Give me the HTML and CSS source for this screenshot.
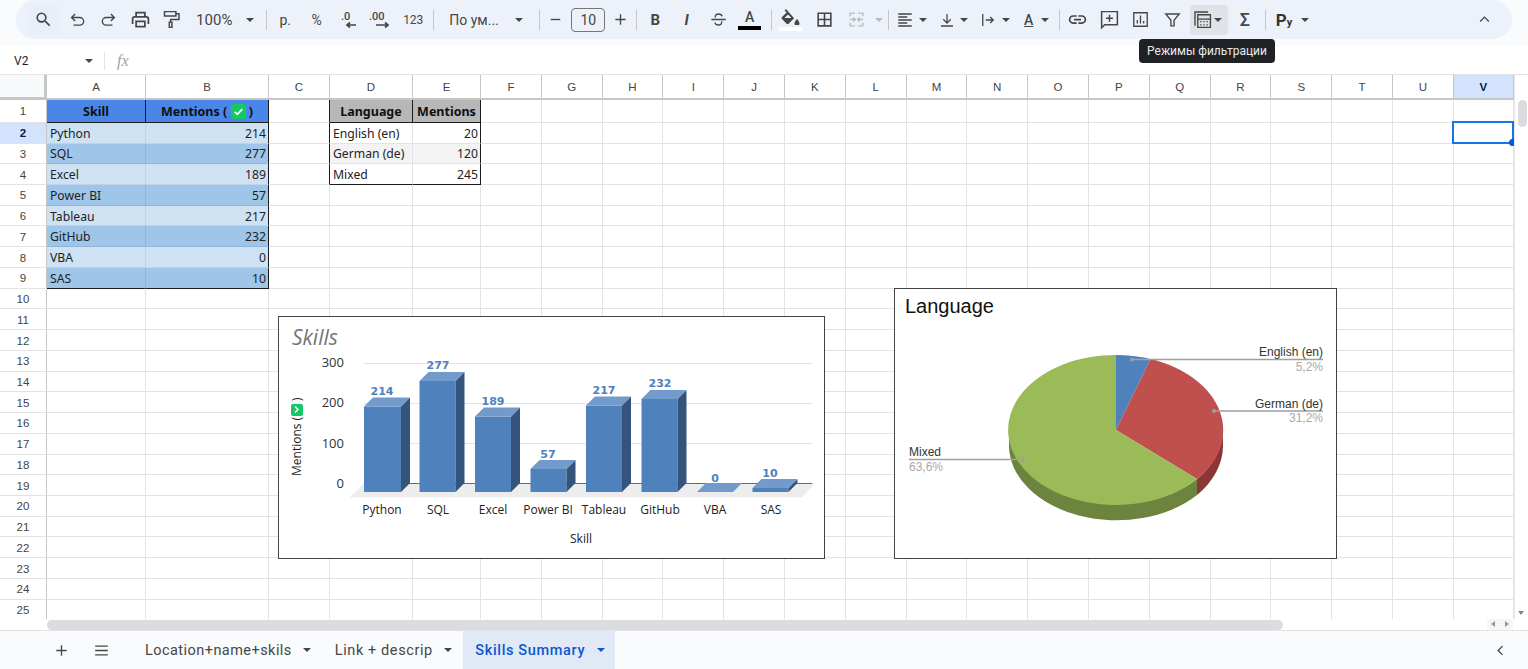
FILE: index.html
```html
<!DOCTYPE html>
<html lang="ru">
<head>
<meta charset="utf-8">
<title>Skills Summary</title>
<link rel="stylesheet" href="styles.css">
</head>
<body>
<header class="top">
  <div class="pill">
    <span class="t search"><svg class="ic" viewBox="0 0 24 24"><path d="M15.5 14h-.79l-.28-.27A6.47 6.47 0 0 0 16 9.5 6.5 6.5 0 1 0 9.5 16c1.61 0 3.09-.59 4.23-1.57l.27.28v.79l5 4.99L20.49 19l-4.99-5zm-6 0C7.01 14 5 11.99 5 9.5S7.01 5 9.5 5 14 7.01 14 9.5 11.99 14 9.5 14z"/></svg></span>
    <span class="t"><svg class="ic line" viewBox="0 0 24 24"><path d="M9 5 4.5 9.5 9 14M4.5 9.5H15a4.8 4.8 0 0 1 0 9.6H7"/></svg></span>
    <span class="t"><svg class="ic line" viewBox="0 0 24 24"><path d="M15 5l4.500 4.500L15 14M19.500 9.500H9a4.800 4.800 0 0 0 0 9.600h8"/></svg></span>
    <span class="t"><svg class="ic big" viewBox="0 0 24 24"><path d="M19 8h-1V3H6v5H5c-1.660 0-3 1.340-3 3v6h4v4h12v-4h4v-6c0-1.660-1.340-3-3-3zM8 5h8v3H8V5zm8 14H8v-4h8v4zm2-2v-4H6v4H4v-6c0-.55.45-1 1-1h14c.55 0 1 .45 1 1v6h-2z"/></svg></span>
    <span class="t"><svg class="ic line big" viewBox="0 0 24 24"><path d="M4 3h13v5H4zM17 5.500h3.500V12H11v3M9.500 15h3v6h-3z"/></svg></span>
    <span class="label zoom">100%</span><span class="caret c-zoom"></span>
    <span class="sep s1"></span>
    <span class="t txt first">р.</span>
    <span class="t txt">%</span>
    <span class="t"><svg class="ic wide" viewBox="0 0 24 24"><text class="dec" x="5" y="12">.0</text><path class="ln" d="M20 17H11M14 14.500 11 17l3 2.500"/></svg></span>
    <span class="t"><svg class="ic wide" viewBox="0 0 24 24"><text class="dec" x="1" y="12">.00</text><path class="ln" d="M8 17h12M17 14.500l3 2.500-3 2.500"/></svg></span>
    <span class="t txt small">123</span>
    <span class="sep s2"></span>
    <span class="label font">По ум...</span><span class="caret c-font"></span>
    <span class="sep s3"></span>
    <span class="t minus"><svg class="ic line" viewBox="0 0 24 24"><path d="M6 12h12"/></svg></span>
    <span class="size">10</span>
    <span class="t plus"><svg class="ic line" viewBox="0 0 24 24"><path d="M5.500 12h13M12 5.500v13"/></svg></span>
    <span class="sep"></span>
    <span class="t txt bold first">B</span>
    <span class="t txt ital">I</span>
    <span class="t"><svg class="ic line" viewBox="0 0 24 24"><path d="M3 12h18M8 9.500C7.500 6.500 9.500 5 12 5s4 1 4.500 3M16 14.500c.5 3-1.500 4.500-4 4.500s-4-1-4.500-3"/></svg></span>
    <span class="t colour"><span class="a">A</span><span class="bar black"></span></span>
    <span class="sep s5"></span>
    <span class="t colour fill"><svg class="bucket" viewBox="0 0 24 16"><path d="M7 0 5.600 1.400l2 2L3 8c-.6.6-.6 1.500 0 2.100l4.600 4.600c.6.6 1.500.6 2.100 0l5.400-5.400zM5.500 9 9 5.500l3.500 3.500zM18 10s-2.500 2.700-2.500 4.300a2.500 2.500 0 0 0 5 0C20.500 12.700 18 10 18 10z"/></svg><span class="bar white"></span></span>
    <span class="t grid-ic"><svg class="ic" viewBox="0 0 24 24"><path d="M3 3v18h18V3H3zm8 16H5v-6h6v6zm0-8H5V5h6v6zm8 8h-6v-6h6v6zm0-8h-6V5h6v6z"/></svg></span>
    <span class="t"><svg class="ic line off" viewBox="0 0 24 24"><path d="M4 8V4h6M4 16v4h6M20 8V4h-6M20 16v4h-6M4 12h6m-2-2.500L10.500 12 8 14.500M20 12h-6m2-2.500L13.500 12l2.500 2.500"/></svg></span>
    <span class="caret off c-merge"></span>
    <span class="sep"></span>
    <span class="split first"><svg class="ic line" viewBox="0 0 24 24"><path d="M3 4h18M3 8h12M3 12h18M3 16h12M3 20h18"/></svg><span class="caret"></span></span>
    <span class="split"><svg class="ic line" viewBox="0 0 24 24"><path d="M4 20h16M12 4v12M7 11l5 5 5-5"/></svg><span class="caret"></span></span>
    <span class="split"><svg class="ic line" viewBox="0 0 24 24"><path d="M5 4v16M9 12h10M15 8l4 4-4 4"/></svg><span class="caret"></span></span>
    <span class="split"><span class="rot">A</span><span class="caret"></span></span>
    <span class="sep s7"></span>
    <span class="t first"><svg class="ic big" viewBox="0 0 24 24"><path d="M3.900 12c0-1.710 1.390-3.100 3.100-3.100h4V7H7c-2.760 0-5 2.240-5 5s2.240 5 5 5h4v-1.900H7c-1.710 0-3.100-1.390-3.100-3.100zM8 13h8v-2H8v2zm9-6h-4v1.900h4c1.710 0 3.100 1.390 3.100 3.100s-1.390 3.100-3.100 3.100h-4V17h4c2.760 0 5-2.240 5-5s-2.240-5-5-5z"/></svg></span>
    <span class="t"><svg class="ic line big" viewBox="0 0 24 24"><path d="M3 3h18v15H6.500L3 21.500zM12 6.500v8M8 10.500h8"/></svg></span>
    <span class="t"><svg class="ic line" viewBox="0 0 24 24"><path d="M3.500 3.500h17v17h-17zM8 12.500V17M12 7v10M16 14v3"/></svg></span>
    <span class="t"><svg class="ic line" viewBox="0 0 24 24"><path d="M3.500 5h17L14 13v7h-4v-7z"/></svg></span>
    <span class="active"><svg class="ic line" viewBox="0 0 24 24"><path d="M2.500 20V2.500H19M6 6h16v16H6zM6 11.500h16M10 14v1.500M14 14v1.500M18 14v1.500M10 18v1.500M14 18v1.500M18 18v1.500"/></svg><span class="caret"></span></span>
    <span class="t txt sigma">Σ</span>
    <span class="sep s8"></span>
    <span class="py">Р<small>у</small></span><span class="caret c-py"></span>
    <span class="t up"><svg class="ic line" viewBox="0 0 24 24"><path d="M6.500 14.500 12 9l5.500 5.500"/></svg></span>
  </div>
</header>

<div class="formula">
  <span class="ref">V2</span><span class="caret"></span><span class="sep"></span><span class="fx">fx</span>
</div>

<main class="main">
  <div class="grid">
    <i class="corner"></i><b class="h">A</b><b class="h">B</b><b class="h">C</b><b class="h">D</b><b class="h">E</b><b class="h">F</b><b class="h">G</b><b class="h">H</b><b class="h">I</b><b class="h">J</b><b class="h">K</b><b class="h">L</b><b class="h">M</b><b class="h">N</b><b class="h">O</b><b class="h">P</b><b class="h">Q</b><b class="h">R</b><b class="h">S</b><b class="h">T</b><b class="h">U</b><b class="h on">V</b>

    <b class="rh">1</b><em class="head blue ctr edge-r">Skill</em><em class="head blue ctr edge-r">Mentions (&nbsp;<svg class="tick" viewBox="0 0 16 16"><rect width="16" height="16" rx="3" fill="#14c864"/><path d="M4 8.500l2.800 2.600L12 5.500" fill="none" stroke="#fff" stroke-width="1.800"/></svg>&nbsp;)</em><i class="edge-r"></i><em class="head grey ctr edge-r">Language</em><em class="head grey ctr edge-r">Mentions</em><i></i><i></i><i></i><i></i><i></i><i></i><i></i><i></i><i></i><i></i><i></i><i></i><i></i><i></i><i></i><i></i><i></i>

    <b class="rh on">2</b><em class="lt">Python</em><em class="lt num edge-r">214</em><i class="edge-r"></i><em class="plain">English (en)</em><em class="plain num edge-r">20</em><i></i><i></i><i></i><i></i><i></i><i></i><i></i><i></i><i></i><i></i><i></i><i></i><i></i><i></i><i></i><i></i><i class="sel"></i>

    <b class="rh">3</b><em class="dk">SQL</em><em class="dk num edge-r">277</em><i class="edge-r"></i><em class="alt">German (de)</em><em class="alt num edge-r">120</em><i></i><i></i><i></i><i></i><i></i><i></i><i></i><i></i><i></i><i></i><i></i><i></i><i></i><i></i><i></i><i></i><i></i>

    <b class="rh">4</b><em class="lt">Excel</em><em class="lt num edge-r">189</em><i class="edge-r"></i><em class="plain edge-b">Mixed</em><em class="plain num edge-r edge-b">245</em><i></i><i></i><i></i><i></i><i></i><i></i><i></i><i></i><i></i><i></i><i></i><i></i><i></i><i></i><i></i><i></i><i></i>

    <b class="rh">5</b><em class="dk">Power BI</em><em class="dk num edge-r">57</em><i></i><i></i><i></i><i></i><i></i><i></i><i></i><i></i><i></i><i></i><i></i><i></i><i></i><i></i><i></i><i></i><i></i><i></i><i></i><i></i>
    <b class="rh">6</b><em class="lt">Tableau</em><em class="lt num edge-r">217</em><i></i><i></i><i></i><i></i><i></i><i></i><i></i><i></i><i></i><i></i><i></i><i></i><i></i><i></i><i></i><i></i><i></i><i></i><i></i><i></i>
    <b class="rh">7</b><em class="dk">GitHub</em><em class="dk num edge-r">232</em><i></i><i></i><i></i><i></i><i></i><i></i><i></i><i></i><i></i><i></i><i></i><i></i><i></i><i></i><i></i><i></i><i></i><i></i><i></i><i></i>
    <b class="rh">8</b><em class="lt">VBA</em><em class="lt num edge-r">0</em><i></i><i></i><i></i><i></i><i></i><i></i><i></i><i></i><i></i><i></i><i></i><i></i><i></i><i></i><i></i><i></i><i></i><i></i><i></i><i></i>
    <b class="rh">9</b><em class="dk edge-b">SAS</em><em class="dk num edge-r edge-b">10</em><i></i><i></i><i></i><i></i><i></i><i></i><i></i><i></i><i></i><i></i><i></i><i></i><i></i><i></i><i></i><i></i><i></i><i></i><i></i><i></i>
    <b class="rh">10</b><i></i><i></i><i></i><i></i><i></i><i></i><i></i><i></i><i></i><i></i><i></i><i></i><i></i><i></i><i></i><i></i><i></i><i></i><i></i><i></i><i></i><i></i>
    <b class="rh">11</b><i></i><i></i><i></i><i></i><i></i><i></i><i></i><i></i><i></i><i></i><i></i><i></i><i></i><i></i><i></i><i></i><i></i><i></i><i></i><i></i><i></i><i></i>
    <b class="rh">12</b><i></i><i></i><i></i><i></i><i></i><i></i><i></i><i></i><i></i><i></i><i></i><i></i><i></i><i></i><i></i><i></i><i></i><i></i><i></i><i></i><i></i><i></i>
    <b class="rh">13</b><i></i><i></i><i></i><i></i><i></i><i></i><i></i><i></i><i></i><i></i><i></i><i></i><i></i><i></i><i></i><i></i><i></i><i></i><i></i><i></i><i></i><i></i>
    <b class="rh">14</b><i></i><i></i><i></i><i></i><i></i><i></i><i></i><i></i><i></i><i></i><i></i><i></i><i></i><i></i><i></i><i></i><i></i><i></i><i></i><i></i><i></i><i></i>
    <b class="rh">15</b><i></i><i></i><i></i><i></i><i></i><i></i><i></i><i></i><i></i><i></i><i></i><i></i><i></i><i></i><i></i><i></i><i></i><i></i><i></i><i></i><i></i><i></i>
    <b class="rh">16</b><i></i><i></i><i></i><i></i><i></i><i></i><i></i><i></i><i></i><i></i><i></i><i></i><i></i><i></i><i></i><i></i><i></i><i></i><i></i><i></i><i></i><i></i>
    <b class="rh">17</b><i></i><i></i><i></i><i></i><i></i><i></i><i></i><i></i><i></i><i></i><i></i><i></i><i></i><i></i><i></i><i></i><i></i><i></i><i></i><i></i><i></i><i></i>
    <b class="rh">18</b><i></i><i></i><i></i><i></i><i></i><i></i><i></i><i></i><i></i><i></i><i></i><i></i><i></i><i></i><i></i><i></i><i></i><i></i><i></i><i></i><i></i><i></i>
    <b class="rh">19</b><i></i><i></i><i></i><i></i><i></i><i></i><i></i><i></i><i></i><i></i><i></i><i></i><i></i><i></i><i></i><i></i><i></i><i></i><i></i><i></i><i></i><i></i>
    <b class="rh">20</b><i></i><i></i><i></i><i></i><i></i><i></i><i></i><i></i><i></i><i></i><i></i><i></i><i></i><i></i><i></i><i></i><i></i><i></i><i></i><i></i><i></i><i></i>
    <b class="rh">21</b><i></i><i></i><i></i><i></i><i></i><i></i><i></i><i></i><i></i><i></i><i></i><i></i><i></i><i></i><i></i><i></i><i></i><i></i><i></i><i></i><i></i><i></i>
    <b class="rh">22</b><i></i><i></i><i></i><i></i><i></i><i></i><i></i><i></i><i></i><i></i><i></i><i></i><i></i><i></i><i></i><i></i><i></i><i></i><i></i><i></i><i></i><i></i>
    <b class="rh">23</b><i></i><i></i><i></i><i></i><i></i><i></i><i></i><i></i><i></i><i></i><i></i><i></i><i></i><i></i><i></i><i></i><i></i><i></i><i></i><i></i><i></i><i></i>
    <b class="rh">24</b><i></i><i></i><i></i><i></i><i></i><i></i><i></i><i></i><i></i><i></i><i></i><i></i><i></i><i></i><i></i><i></i><i></i><i></i><i></i><i></i><i></i><i></i>
    <b class="rh">25</b><i></i><i></i><i></i><i></i><i></i><i></i><i></i><i></i><i></i><i></i><i></i><i></i><i></i><i></i><i></i><i></i><i></i><i></i><i></i><i></i><i></i><i></i>
  </div>
  <div class="vbar"><span class="vthumb"></span><span class="vdown"></span></div>

  <figure class="chart skills">
    <svg viewBox="278 316 547 243" width="547" height="243">
      <g class="gl"><path d="M364 363.500h448M364 403.500h448M364 443.500h448"/></g>
      <polygon class="floor" points="350,497.500 802,497.500 815,483 364,483"/>
      <path class="base" d="M364 483.500h448"/>
      <g class="f"><rect x="364" y="406.500" width="37" height="85.500"/><rect x="419.500" y="381" width="36" height="111"/><rect x="475" y="416.500" width="36" height="75.500"/><rect x="530.500" y="469" width="36" height="23"/><rect x="586" y="405.500" width="36" height="86.500"/><rect x="641.500" y="399" width="36" height="93"/><rect x="752.500" y="488" width="36" height="4"/></g>
      <g class="s"><polygon points="401,406.500 410,397.500 410,483 401,492"/><polygon points="455.500,381 464.500,372 464.500,483 455.500,492"/><polygon points="511,416.500 520,407.500 520,483 511,492"/><polygon points="566.500,469 575.500,460 575.500,483 566.500,492"/><polygon points="622,405.500 631,396.500 631,483 622,492"/><polygon points="677.500,399 686.500,390 686.500,483 677.500,492"/><polygon points="788.500,488 797.500,479 797.500,483 788.500,492"/></g>
      <g class="u"><polygon points="364,406.500 373,397.500 410,397.500 401,406.500"/><polygon points="419.500,381 428.500,372 464.500,372 455.500,381"/><polygon points="475,416.500 484,407.500 520,407.500 511,416.500"/><polygon points="530.500,469 539.500,460 575.500,460 566.500,469"/><polygon points="586,405.500 595,396.500 631,396.500 622,405.500"/><polygon points="641.500,399 650.500,390 686.500,390 677.500,399"/><polygon points="697,492 706,483 742,483 733,492"/><polygon points="752.500,488 761.500,479 797.500,479 788.500,488"/></g>
      <text class="ttl" x="292" y="345">Skills</text>
      <g class="vals"><text x="382" y="395">214</text><text x="438" y="369">277</text><text x="493" y="405">189</text><text x="548" y="458">57</text><text x="604" y="394">217</text><text x="660" y="387">232</text><text x="715" y="482">0</text><text x="770" y="477">10</text></g>
      <g class="yt"><text x="344" y="367">300</text><text x="344" y="407">200</text><text x="344" y="448">100</text><text x="344" y="488">0</text></g>
      <g class="xt"><text x="382" y="514">Python</text><text x="438" y="514">SQL</text><text x="493" y="514">Excel</text><text x="548" y="514">Power BI</text><text x="604" y="514">Tableau</text><text x="660" y="514">GitHub</text><text x="715" y="514">VBA</text><text x="771" y="514">SAS</text><text x="581" y="543">Skill</text></g>
      <text class="yl" transform="translate(301 476) rotate(-90)">Mentions (</text>
      <rect x="291" y="404" width="12" height="12" rx="2" fill="#14c864"/>
      <path d="M295 406.500l3 3-3 3" fill="none" stroke="#fff" stroke-width="1.500"/>
      <text class="yl" transform="translate(301 401) rotate(-90)">)</text>
    </svg>
  </figure>

  <figure class="chart lang">
    <svg viewBox="894 288 443 271" width="443" height="271">
      <path fill="#6d843e" d="M1009 430v16a107.500 75 0 0 0 188 49v-16a107.500 75 0 0 1-188-49z"/>
      <path fill="#8a3735" d="M1197 479v16c16-13 26-31 26-49v-16c0 18-10 36-26 49z"/>
      <path fill="#4f81bd" d="M1116 430v-75a107.500 75 0 0 1 34.500 4z"/>
      <path fill="#c0504d" d="M1116 430l34.500-71a107.500 75 0 0 1 46.500 120z"/>
      <path fill="#9bbb59" d="M1116 430l81 49a107.500 75 0 1 1-81-124z"/>
      <g class="lead"><path d="M1132 359.500h191M1214 411h109M1023 459.500H909"/></g>
      <g class="dots"><circle cx="1132" cy="359.500" r="2"/><circle cx="1214" cy="411" r="2"/><circle cx="1023" cy="459.500" r="2"/></g>
      <text class="ptitle" x="905" y="313">Language</text>
      <g class="pl end"><text x="1323" y="356">English (en)</text><text x="1323" y="408">German (de)</text></g>
      <g class="pv end"><text x="1323" y="371">5,2%</text><text x="1323" y="422">31,2%</text></g>
      <text class="pl" x="909" y="456">Mixed</text>
      <text class="pv" x="909" y="471">63,6%</text>
    </svg>
  </figure>
</main>

<div class="hbar">
  <span class="hthumb"></span>
  <span class="harrows"><span class="al"></span><span class="ar"></span></span>
</div>

<footer class="tabs">
  <span class="add"><svg class="ic line" viewBox="0 0 24 24"><path d="M5.500 12h13M12 5.500v13"/></svg></span>
  <span class="menu"><svg class="ic line" viewBox="0 0 24 24"><path d="M4 6.500h16M4 12h16M4 17.500h16"/></svg></span>
  <span class="tab t1">Location+name+skils<span class="caret"></span></span>
  <span class="tab t2">Link + descrip<span class="caret"></span></span>
  <span class="tab current">Skills Summary<span class="caret"></span></span>
  <span class="side"><svg class="ic line" viewBox="0 0 24 24"><path d="M14.500 6.500 9 12l5.500 5.500"/></svg></span>
</footer>

<div class="tip">Режимы фильтрации</div>
</body>
</html>
```

FILE: styles.css
```css
* { box-sizing: border-box; }
html, body { margin: 0; height: 100%; }
body {
  position: relative;
  width: 1528px;
  height: 669px;
  overflow: hidden;
  display: flex;
  flex-direction: column;
  background: #f9fbfd;
  font-family: Roboto, "Liberation Sans", sans-serif;
  color: #444746;
}
svg { display: block; }

/* toolbar */
.top { height: 46px; flex: none; padding: 0 16px; }
.pill {
  height: 39px;
  display: flex;
  align-items: center;
  padding: 0 12px 0 11px;
  background: #edf2fa;
  border-radius: 20px;
}
.t { flex: none; width: 31.5px; height: 30px; display: flex; align-items: center; justify-content: center; }
.ic { width: 19px; height: 19px; fill: #444746; flex: none; }
.ic.big { width: 21px; height: 21px; }
.ic.wide { width: 24px; height: 24px; }
.ic.line, .ln { fill: none; stroke: #444746; stroke-width: 1.700; }
.ic.off { stroke: #b9bcbd; }
.dec { font: 500 11px Roboto, sans-serif; fill: #444746; stroke: none; }
.caret { flex: none; display: inline-block; width: 0; height: 0; border: 4.500px solid transparent; border-bottom-width: 0; border-top: 4.500px solid #444746; }
.caret.off { border-top-color: #b9bcbd; }
.sep { flex: none; width: 1px; height: 20px; background: #c7c7c7; }
.label { flex: none; font-size: 15px; }

.search { width: 32px; margin-right: 2.250px; background: #e9eff8; }
.zoom { width: 54px; text-align: center; color: #444746; }
.c-zoom { margin: 0 4.500px; }
.s1 { margin-left: 8px; }
.first { margin-left: 2.250px; }
.txt { font-size: 14px; }
.small { font-size: 12px; margin-left: 2px; }
.s2 { margin-left: 4.250px; }
.font { width: 60px; margin-left: 15px; font-size: 14px; white-space: nowrap; }
.c-font { margin-left: 5.500px; }
.s3 { margin-left: 16.500px; }
.minus { width: 31px; }
.plus { width: 31px; }
.size { flex: none; width: 34px; height: 24px; border: 1px solid #747775; border-radius: 4px; font-size: 14px; display: flex; align-items: center; justify-content: center; }
.bold { font-weight: 700; font-size: 15px; }
.ital { font-weight: 700; font-style: italic; font-size: 15px; }
.colour { flex-direction: column; gap: 0; }
.a { font-size: 14px; font-weight: 500; line-height: 14px; color: #444746; }
.bar { width: 23px; height: 4px; margin-top: 2px; }
.black { background: #000; }
.white { background: #fff; }
.s5 { margin-left: 5px; }
.fill { margin-left: 3.250px; }
.bucket { width: 24px; height: 16px; fill: #444746; }
.grid-ic { margin-left: 2.500px; }
.c-merge { margin: 0 5.500px 0 3px; border-width: 4px 4px 0; }
.split { flex: none; width: 36px; margin-left: 5.500px; display: flex; align-items: center; }
.split.first { margin-left: 3px; }
.split .ic { width: 26px; padding: 0 4px; height: 18px; }
.split .caret { border-width: 4.500px 4.500px 0; margin-left: 0.500px; }
.rot { width: 24px; text-align: center; font-size: 14px; font-weight: 500; text-decoration: underline; }
.s7 { margin-left: 6px; }
.active { flex: none; width: 38px; height: 30px; margin-left: 1.750px; background: #dfe3e7; border-radius: 4px; display: flex; align-items: center; padding-left: 3px; gap: 2px; }
.active .caret { border-width: 4.500px 4.500px 0; }
.sigma { margin-left: 1.250px; font-size: 18px; font-weight: 500; }
.s8 { margin-left: 4.250px; }
.py { flex: none; width: 30px; margin-left: 4px; font-size: 17px; font-weight: 700; color: #333; padding-left: 6px; }
.py small { font-size: 11px; }
.c-py { margin-left: 1px; }
.up { margin-left: auto; }

/* formula bar */
.formula { height: 29px; flex: none; background: #fff; display: flex; align-items: center; padding: 1px 0 0 14px; border-bottom: 1px solid #e3e3e3; }
.ref { width: 71px; font: 12px Roboto, sans-serif; color: #1f1f1f; }
.formula .sep { margin-left: 11px; height: 18px; background: #e3e3e3; }
.fx { margin-left: 12px; font: italic 16px "Liberation Serif", serif; color: #a0a3a6; }

/* grid */
.main { position: relative; flex: none; height: 544px; display: flex; background: #fff; }
.grid {
  flex: none;
  width: 1514px;
  display: grid;
  grid-template-columns: 47px 99px 123px 61px 83px 68px repeat(16, 60.800px) 60.200px;
  grid-template-rows: 24.500px 23.300px repeat(24, 20.740px);
}
.grid > * { display: flex; align-items: center; padding-top: 1px; font-style: normal; font-weight: 400; min-width: 0; border-right: 1px solid #e2e3e3; border-bottom: 1px solid #e2e3e3; }
.grid > .corner { background: #f8f9fa; border-right: 3px solid #c4c7c5; border-bottom: 3px solid #c4c7c5; }
.grid > .h { justify-content: center; font: 400 11.500px "Liberation Sans", Arial, sans-serif; color: #444; background: #fff; border-right-color: #c7c7c7; border-bottom: 2px solid #c7c7c7; }
.grid > .rh { justify-content: center; font: 400 11.500px "Liberation Sans", Arial, sans-serif; color: #444; background: #fff; border-right-color: #c7c7c7; }
.grid > .on { background: #d3e3fd; font-weight: 700; color: #041e49; }
.grid > em { font: 400 12.200px "Noto Sans", sans-serif; color: #222; padding: 1px 2px 0 3px; white-space: nowrap; }
.grid > .ctr { justify-content: center; }
.grid > .num { justify-content: flex-end; }
.grid > .head { font-weight: 700; font-size: 12.500px; color: #101010; padding: 1px 0 0; border-bottom-color: #1c1c1c; }
.grid > .blue { background: #4a86e8; }
.grid > .grey { background: #b7b7b7; }
.grid > .lt { background: #cfe2f3; border-color: #bcd3e9; }
.grid > .dk { background: #9fc5e8; border-color: #8fb5da; }
.grid > .plain { background: #fff; }
.grid > .alt { background: #f3f3f3; }
.grid > .edge-r { border-right-color: #1c1c1c; }
.grid > .edge-b { border-bottom-color: #1c1c1c; }
.tick { width: 15px; height: 15px; flex: none; }
.grid > .sel { position: relative; }
.sel::before { content: ""; position: absolute; inset: -1.500px -1px -1px -1.500px; border: 2px solid #1a73e8; }
.sel::after { content: ""; position: absolute; right: -3px; bottom: -3px; width: 7px; height: 7px; border-radius: 50%; background: #0b57d0; }

/* vertical scrollbar */
.vbar { flex: 1; position: relative; background: #fff; border-left: 1px solid #e8e8e8; }
.vthumb { position: absolute; left: 3px; top: 25px; width: 9px; height: 27px; border-radius: 5px; background: #dadce0; }
.vdown { position: absolute; left: 3px; bottom: 4px; border: 3px solid transparent; border-bottom-width: 0; border-top: 4px solid #80868b; }

/* charts */
.chart { position: absolute; margin: 0; background: #fff; }
.skills { left: 278px; top: 241px; outline: 1px solid #434343; outline-offset: -1px; width: 547px; height: 243px; }
.lang { left: 894px; top: 213px; outline: 1px solid #434343; outline-offset: -1px; width: 443px; height: 271px; }
.gl path { stroke: #e3e3e3; stroke-width: 1; fill: none; }
.floor { fill: #ededed; }
.base { stroke: #6a6a6a; stroke-width: 1; }
.f { fill: #4f81bd; }
.s { fill: #34547c; }
.u { fill: #729aca; }
.ttl { font: italic 21px "Open Sans", sans-serif; fill: #757575; }
.vals text { font: 700 11px "DejaVu Sans", sans-serif; fill: #4f81bd; text-anchor: middle; }
.yt text { font: 13px "Open Sans", sans-serif; fill: #333; text-anchor: end; }
.xt text { font: 12px "Open Sans", sans-serif; fill: #222; text-anchor: middle; }
.yl { font: 12px "Open Sans", sans-serif; fill: #222; }
.lead path { stroke: #a0a0a0; stroke-width: 1.500; fill: none; }
.dots { fill: #a0a0a0; }
.ptitle { font: 20px "Liberation Sans", Arial, sans-serif; fill: #111; }
.pl, .pl text { font: 12px "Liberation Sans", Arial, sans-serif; fill: #333; }
.pv, .pv text { font: 12px "Liberation Sans", Arial, sans-serif; fill: #a9a9a9; }
.end text { text-anchor: end; }

/* horizontal scrollbar */
.hbar { height: 12px; flex: none; background: #fff; position: relative; border-bottom: 1px solid #e3e3e3; }
.hthumb { position: absolute; left: 47px; top: 1px; width: 1236px; height: 10px; border-radius: 5px; background: #dadce0; }
.harrows { position: absolute; left: 1487px; top: 0; width: 26px; height: 11px; display: flex; background: #f6f6f6; }
.al, .ar { width: 13px; position: relative; }
.al::after { content: ""; position: absolute; left: 4px; top: 2px; border: 3px solid transparent; border-left-width: 0; border-right: 4px solid #999; }
.ar::after { content: ""; position: absolute; left: 5px; top: 2px; border: 3px solid transparent; border-right-width: 0; border-left: 4px solid #999; }

/* sheet tabs */
.tabs { flex: 1; display: flex; align-items: stretch; font-size: 14.500px; letter-spacing: .45px; }
.add { margin-left: 51px; width: 20px; display: flex; align-items: center; justify-content: center; }
.menu { margin-left: 20px; width: 20px; display: flex; align-items: center; justify-content: center; }
.tab { flex: none; display: flex; align-items: center; white-space: nowrap; color: #444746; }
.tab .caret { margin-left: 11px; }
.t1 { margin-left: 34px; }
.t2 { margin-left: 24px; letter-spacing: .6px; }
.current { margin-left: 11.500px; padding: 0 10px 0 12px; width: 152px; background: #e1e9f7; color: #0b57d0; font-weight: 500; letter-spacing: .65px; }
.current .caret { border-top-color: #0b57d0; margin-left: 11.500px; }
.side { margin-left: auto; margin-right: 18px; display: flex; align-items: center; }

/* tooltip */
.tip { position: absolute; left: 1139px; top: 39px; width: 136px; height: 24px; border-radius: 4px; background: #202124; color: #e8eaed; font-size: 12px; display: flex; align-items: center; justify-content: center; white-space: nowrap; }
```
